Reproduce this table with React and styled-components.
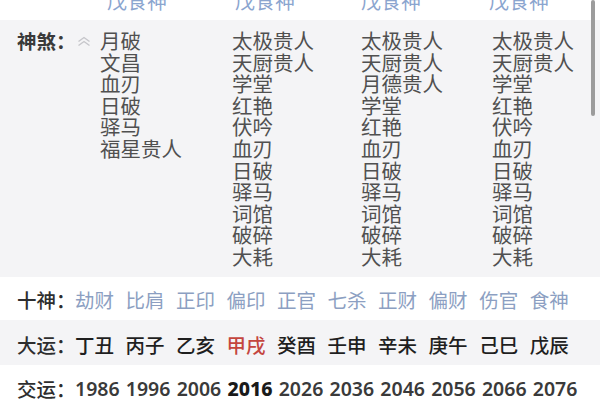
import React from "react";
import styled, { createGlobalStyle } from "styled-components";

const GlobalStyle = createGlobalStyle`
  body {
    margin: 0;
    background: #ffffff;
    font-family: "Noto Sans", "Noto Sans CJK SC", sans-serif;
  }
`;

const pillars = [
  ["月破", "文昌", "血刃", "日破", "驿马", "福星贵人"],
  ["太极贵人", "天厨贵人", "学堂", "红艳", "伏吟", "血刃", "日破", "驿马", "词馆", "破碎", "大耗"],
  ["太极贵人", "天厨贵人", "月德贵人", "学堂", "红艳", "血刃", "日破", "驿马", "词馆", "破碎", "大耗"],
  ["太极贵人", "天厨贵人", "学堂", "红艳", "伏吟", "血刃", "日破", "驿马", "词馆", "破碎", "大耗"],
];

const shishen = ["劫财", "比肩", "正印", "偏印", "正官", "七杀", "正财", "偏财", "伤官", "食神"];
const dayun = ["丁丑", "丙子", "乙亥", "甲戌", "癸酉", "壬申", "辛未", "庚午", "己巳", "戊辰"];
const years = ["1986", "1996", "2006", "2016", "2026", "2036", "2046", "2056", "2066", "2076"];

const App = () => {
  return (
    <>
      <GlobalStyle />
      <Page>
        <HeaderRow>
          {[0, 1, 2, 3].map((i) => (
            <HeaderCell key={i}>戊食神</HeaderCell>
          ))}
        </HeaderRow>
        <Shensha>
          <LabelCell>
            <Label>神煞：</Label>
            <Chevron width="14" height="11" viewBox="0 0 14 11">
              <path d="M1.5 5.5 L7 1.5 L12.5 5.5 M1.5 9.5 L7 5.5 L12.5 9.5" />
            </Chevron>
          </LabelCell>
          {pillars.map((list, i) => (
            <Column key={i}>
              {list.map((name, j) => (
                <div key={j}>{name}</div>
              ))}
            </Column>
          ))}
        </Shensha>
        <InfoRow>
          <RowLabel>十神：</RowLabel>
          <Items>
            {shishen.map((s) => (
              <GodItem key={s}>{s}</GodItem>
            ))}
          </Items>
        </InfoRow>
        <InfoRow $grey>
          <RowLabel>大运：</RowLabel>
          <Items>
            {dayun.map((s) => (
              <LuckItem key={s} $current={s === "甲戌"}>
                {s}
              </LuckItem>
            ))}
          </Items>
        </InfoRow>
        <InfoRow $last>
          <RowLabel>交运：</RowLabel>
          <Items $tight>
            {years.map((y) => (
              <Year key={y} $current={y === "2016"}>
                {y}
              </Year>
            ))}
          </Items>
        </InfoRow>
        <Scrollbar />
      </Page>
    </>
  );
};

const Page = styled.div`
  position: relative;
  width: 600px;
  height: 400px;
  overflow: hidden;
  background: #ffffff;
  font-family: "Noto Sans", "Noto Sans CJK SC", sans-serif;
`;

const HeaderRow = styled.div`
  display: grid;
  grid-template-columns: 128px 126px 128px 100px;
  padding-left: 107px;
  height: 20px;
  overflow: hidden;
`;

const HeaderCell = styled.div`
  margin-top: -8px;
  font-size: 20px;
  line-height: 20px;
  color: #8ba5cf;
`;

const Shensha = styled.div`
  display: grid;
  grid-template-columns: 100px 132px 129px 131px 1fr;
  background: #f4f4f6;
  padding: 11px 0 8px;
  height: 257px;
  box-sizing: border-box;
`;

const LabelCell = styled.div`
  display: flex;
  align-items: flex-start;
  padding-left: 17px;
`;

const Label = styled.span`
  font-size: 19.5px;
  line-height: 21.6px;
  font-weight: 700;
  color: #3a3a3a;
  white-space: nowrap;
`;

const Chevron = styled.svg`
  margin: 5px 0 0 1px;
  fill: none;
  stroke: #c6c6cb;
  stroke-width: 1.4;
`;

const Column = styled.div`
  font-size: 20.5px;
  line-height: 21.6px;
  color: #505050;
  white-space: nowrap;
`;

const InfoRow = styled.div`
  display: flex;
  align-items: center;
  padding-left: 17px;
  height: ${(p) => (p.$last ? "35px" : p.$grey ? "45px" : "43px")};
  padding-top: ${(p) => (p.$last ? "11px" : p.$grey ? "4px" : "2px")};
  box-sizing: border-box;
  background: ${(p) => (p.$grey ? "#f4f4f6" : "#ffffff")};
`;

const RowLabel = styled.span`
  font-size: 19.5px;
  font-weight: 500;
  color: #2e2e2e;
  width: 58px;
  white-space: nowrap;
`;

const Items = styled.div`
  display: flex;
  gap: ${(p) => (p.$tight ? "6.2px" : "11.5px")};
  white-space: nowrap;
`;

const GodItem = styled.span`
  font-size: 19.5px;
  color: #8c9fc2;
`;

const LuckItem = styled.span`
  font-size: 19.5px;
  font-weight: 500;
  color: ${(p) => (p.$current ? "#c4463f" : "#1f1f1f")};
`;

const Year = styled.span`
  font-size: 19.5px;
  font-weight: ${(p) => (p.$current ? 800 : 600)};
  color: ${(p) => (p.$current ? "#1a1a1a" : "#3a3a3a")};
`;

const Scrollbar = styled.div`
  position: absolute;
  top: 0;
  right: 5px;
  width: 4px;
  height: 116px;
  border-radius: 2px;
  background: #9c9c9c;
`;

export default App;
